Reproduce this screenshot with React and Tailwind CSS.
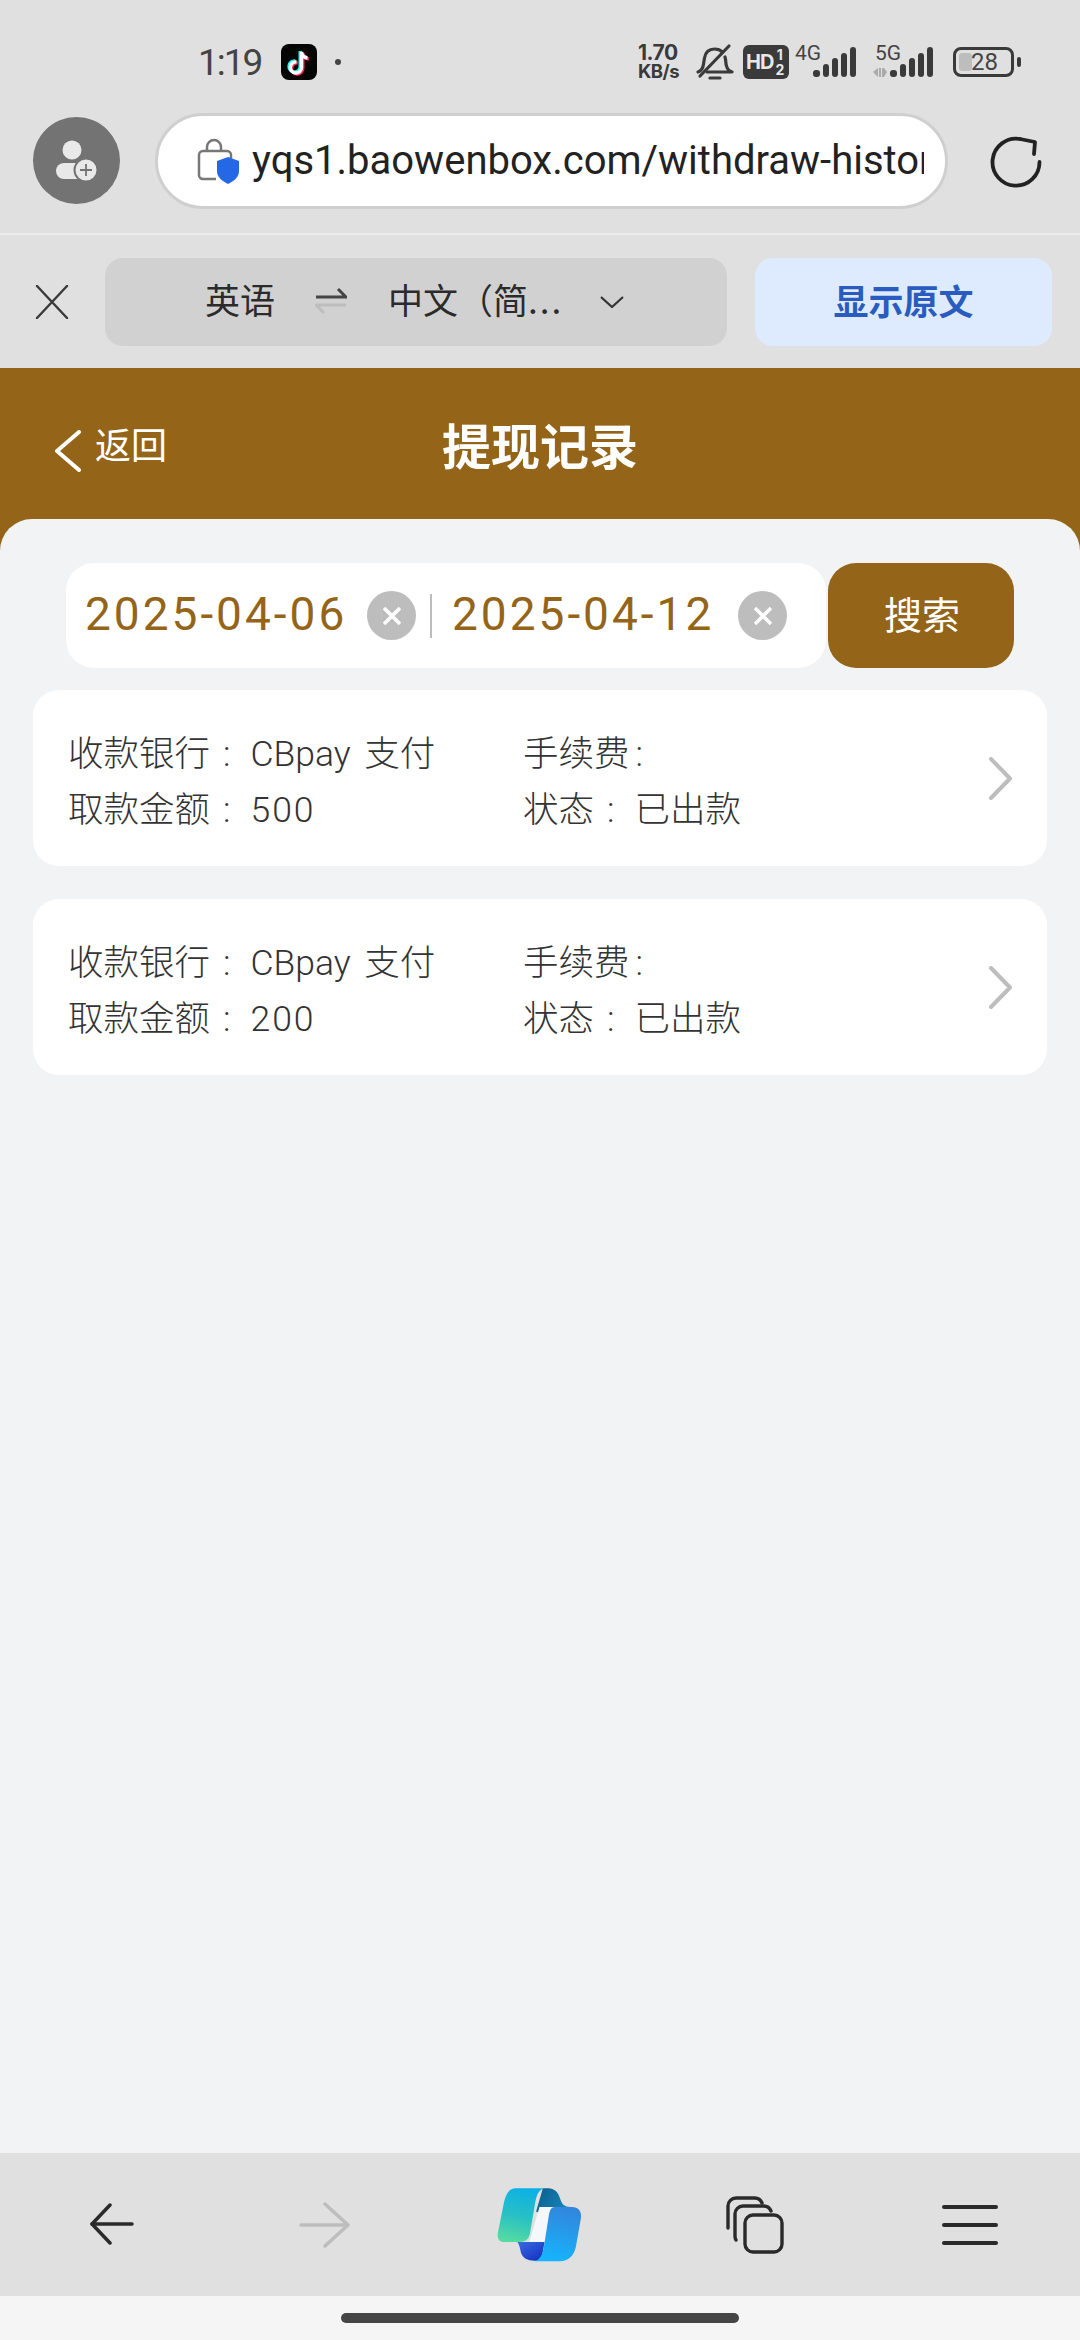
const records = [
  { amount: "500" },
  { amount: "200" },
]

function TikTokIcon() {
  const note = "M20.5 8v15.5a5.6 5.6 0 1 1-5-5.6M20.5 8c.4 3.4 2.7 5.6 6 6"
  return (
    <svg width="36" height="36" viewBox="0 0 36 36" className="ml-[19px]">
      <rect width="36" height="36" rx="8" fill="#050505" />
      <path d={note} transform="translate(-1.3 -1)" fill="none" stroke="#25f4ee" strokeWidth="3.4" />
      <path d={note} transform="translate(1.3 1)" fill="none" stroke="#fe2c55" strokeWidth="3.4" />
      <path d={note} fill="none" stroke="#fff" strokeWidth="3.4" />
    </svg>
  )
}

function Signal({ label, arrows }) {
  return (
    <svg width="66" height="36" viewBox="0 0 66 36" className="shrink-0 overflow-visible">
      <text x={arrows ? 3 : 0} y="16" fontSize="21" fontFamily="Roboto, sans-serif" fill="#444">{label}</text>
      {arrows && (
        <g fill="#aaa">
          <path d="M1 28l5-4v9zM7 24h2v9H7zM10 24h2v9h-2zM15 28l-3-4v9z" />
        </g>
      )}
      <g fill="#3a3a3a">
        <rect x="18" y="26" width="7" height="7" rx="3" />
        <rect x="28" y="20" width="6" height="13" rx="3" />
        <rect x="37" y="14" width="6" height="19" rx="3" />
        <rect x="46" y="9" width="6" height="24" rx="3" />
        <rect x="55" y="3" width="6" height="30" rx="3" />
      </g>
    </svg>
  )
}

function StatusBar() {
  return (
    <div className="flex h-[113px] items-start pt-[44px] bg-[#e0e0e0] text-[#444]">
      <div className="flex h-[36px] items-center pl-[198px]">
        <span className="w-[64px] font-['Roboto',sans-serif] text-[37px] leading-none tracking-[-2px]">1:19</span>
        <TikTokIcon />
        <span className="ml-[18px] h-[6px] w-[6px] rounded-full bg-[#444]" />
      </div>
      <div className="ml-[297px] flex h-[36px] items-center">
        <div className="w-[50px] font-['Inter',sans-serif] text-[21px] font-bold leading-[18px] tracking-[-0.5px] text-[#3a3a3a]">
          <div>1.70</div>
          <div className="text-[18.5px]">KB/s</div>
        </div>
        <svg width="38" height="38" viewBox="0 0 38 38" className="ml-[8px] shrink-0" fill="none" stroke="#3a3a3a" strokeWidth="3.2" strokeLinecap="round" strokeLinejoin="round">
          <path d="M2 29c3-1 5-4 5.500-8l1-6c1-6 5-9 10-9 3 0 6 1 8 3M29 14c1 3 .5 6 1.500 9 .7 3 3 5 5.500 6H11" />
          <path d="M4 33L33 3" />
          <path d="M14 35h10" />
        </svg>
        <div className="ml-[9px] flex h-[34px] w-[46px] shrink-0 items-center rounded-[6px] bg-[#3a3a3a] pl-[3px] font-['Inter',sans-serif] font-bold text-[#e8e8e8]">
          <span className="text-[20px] leading-none tracking-[-1px]">HD</span>
          <span className="ml-[2px] flex flex-col items-center text-[14px] leading-[15px]">
            <span>1</span>
            <span>2</span>
          </span>
        </div>
        <div className="ml-[6px]"><Signal label="4G" /></div>
        <div className="ml-[11px]"><Signal label="5G" arrows /></div>
        <div className="relative ml-[15px] flex h-[30px] w-[61px] shrink-0 items-center rounded-[8px] border-[3px] border-[#3a3a3a]">
          <span className="absolute left-[3px] top-[3px] h-[18px] w-[13px] rounded-[3px] bg-[#bdbdbd]" />
          <span className="relative ml-[15px] font-['Roboto',sans-serif] text-[24px] leading-none">28</span>
        </div>
        <span className="ml-[3px] h-[10px] w-[4px] rounded-full bg-[#3a3a3a]" />
      </div>
    </div>
  )
}

function AddressBar() {
  return (
    <div className="flex h-[120px] items-start bg-[#e0e0e0] pl-[33px]">
      <div className="mt-[4px] flex h-[87px] w-[87px] shrink-0 items-center justify-center rounded-full bg-[#737373]">
        <svg width="44" height="44" viewBox="0 0 44 44">
          <circle cx="17" cy="11" r="9.500" fill="#e9e9e9" />
          <path d="M9 24h16a8 8 0 0 1 0 16H9a8 8 0 0 1 0-16z" fill="#e9e9e9" />
          <circle cx="31" cy="31" r="11.500" fill="#e9e9e9" stroke="#737373" strokeWidth="2" />
          <path d="M31 25v12M25 31h12" stroke="#737373" strokeWidth="1.800" />
        </svg>
      </div>
      <div className="ml-[35px] flex h-[96px] w-[793px] items-center overflow-hidden rounded-full border-[3px] border-[#cfcfcf] bg-white pl-[38px]">
        <svg width="44" height="48" viewBox="0 0 44 48" className="shrink-0">
          <path d="M11 14V10a7 7 0 0 1 14 0v4" fill="none" stroke="#777" strokeWidth="2.500" />
          <path d="M20 42H7a4 4 0 0 1-4-4V18a4 4 0 0 1 4-4h24a4 4 0 0 1 4 4v4" fill="none" stroke="#777" strokeWidth="2.500" />
          <path d="M32 20l11 4v10c0 6-5 10-11 13-6-3-11-7-11-13V24z" fill="#2468e6" />
        </svg>
        <div className="ml-[12px] w-[672px] overflow-hidden whitespace-nowrap font-['Roboto',sans-serif] text-[40px] leading-[48px] text-[#222]">
          yqs1.baowenbox.com/withdraw-history
        </div>
      </div>
      <svg width="52" height="52" viewBox="0 0 52 52" className="ml-[42px] mt-[23px] shrink-0" fill="none" stroke="#222" strokeWidth="3.800" strokeLinecap="round" strokeLinejoin="round">
        <path d="M30 3A23.500 23.500 0 1 0 49.500 26" />
        <path d="M30 3l15 3-1 12" />
      </svg>
    </div>
  )
}

function TranslateBar() {
  return (
    <div className="flex h-[135px] items-start border-t-[2px] border-[#ececec] bg-[#e0e0e0] pt-[23px]">
      <svg width="34" height="34" viewBox="0 0 34 34" className="ml-[35px] mt-[27px] shrink-0" stroke="#3a3a3a" strokeWidth="2.400" strokeLinecap="round">
        <path d="M2 1l30 32M32 1L2 33" />
      </svg>
      <div className="ml-[36px] flex h-[88px] w-[622px] items-center rounded-[18px] bg-[#d1d1d1] pb-[5px] pl-[100px] text-[35px] text-[#2b2b2b]">
        <span className="w-[70px]">英语</span>
        <svg width="32" height="30" viewBox="0 0 32 30" className="ml-[40px] shrink-0" fill="none" strokeWidth="3">
          <path d="M1 12h30l-8-8" stroke="#444" />
          <path d="M31 20H1l8 8" stroke="#bdbdbd" />
        </svg>
        <span className="ml-[41px] w-[178px] whitespace-nowrap">中文（简<span className="tracking-[2px]">...</span></span>
        <svg width="24" height="12" viewBox="0 0 24 12" className="ml-[34px] mt-[5px] shrink-0" fill="none" stroke="#333" strokeWidth="2.200">
          <path d="M1 1l11 10L23 1" />
        </svg>
      </div>
      <div className="ml-[28px] flex h-[88px] w-[297px] items-center justify-center rounded-[18px] bg-[#deebff] pb-[3px] text-[35px] font-bold text-[#2a5cc0]">
        显示原文
      </div>
    </div>
  )
}

function DateField({ value, gap }) {
  return (
    <>
      <span className="mb-[3px] w-[258px] shrink-0 whitespace-nowrap font-['Roboto',sans-serif] text-[46px] leading-none tracking-[3px] text-[#946519]">{value}</span>
      <span className={`${gap} flex h-[49px] w-[49px] shrink-0 items-center justify-center rounded-full bg-[#bdbdbd]`}>
        <svg width="24" height="24" viewBox="0 0 24 24" stroke="#fff" strokeWidth="3.500">
          <path d="M4 4l16 16M20 4L4 20" />
        </svg>
      </span>
    </>
  )
}

function SearchRow() {
  return (
    <div className="ml-[66px] flex h-[105px] w-[948px] gap-[2px]">
      <div className="flex w-[760px] items-center rounded-[28px] bg-white pl-[19px]">
        <DateField value="2025-04-06" gap="ml-[24px]" />
        <span className="ml-[14px] mr-[20px] h-[44px] w-[2px] shrink-0 bg-[#bdbdbd]" />
        <DateField value="2025-04-12" gap="ml-[28px]" />
      </div>
      <button className="flex w-[186px] items-center justify-center rounded-[28px] bg-[#946519] pb-[6px] pl-[2px] text-[38px] text-white">
        搜索
      </button>
    </div>
  )
}

function Field({ label, value, colonGap = true }) {
  return (
    <div className="flex h-[56px] items-center whitespace-nowrap">
      <span>{label}</span>
      <span className={colonGap ? "ml-[13px] mr-[20px]" : "ml-[6px]"}>:</span>
      {value && <span className="[word-spacing:5px]">{value}</span>}
    </div>
  )
}

function RecordCard({ amount }) {
  return (
    <div className="flex h-[176px] items-center rounded-[26px] bg-white pl-[35px] font-['Roboto','Noto_Sans_CJK_SC',sans-serif] text-[35.500px] font-light text-[#333]">
      <div className="w-[455px] shrink-0 pt-[9px]">
        <Field label="收款银行" value="CBpay 支付" />
        <Field label="取款金额" value={<span className="tracking-[2px]">{amount}</span>} />
      </div>
      <div className="w-[455px] shrink-0 pt-[9px]">
        <Field label="手续费" colonGap={false} />
        <Field label="状态" value="已出款" />
      </div>
      <svg width="25" height="43" viewBox="0 0 25 43" className="ml-[10px] shrink-0" fill="none" stroke="#bdbdbd" strokeWidth="4" strokeLinecap="round" strokeLinejoin="round">
        <path d="M3 2l19 19.500L3 41" />
      </svg>
    </div>
  )
}

function BottomNav() {
  return (
    <div className="flex h-[143px] items-start bg-[#e0e0e0] text-[#222]">
      <svg width="44" height="42" viewBox="0 0 44 42" className="ml-[90px] mt-[50px] shrink-0" fill="none" stroke="#2a2a2a" strokeWidth="3.500" strokeLinecap="round" strokeLinejoin="round">
        <path d="M20 2L2 21l18 19" />
        <path d="M2 21h40" />
      </svg>
      <svg width="52" height="46" viewBox="0 0 52 46" className="ml-[165px] mt-[49px] shrink-0" fill="none" stroke="#bdbdbd" strokeWidth="3.500" strokeLinecap="round" strokeLinejoin="round">
        <path d="M26 2l23 21-23 21" />
        <path d="M2 23h46" />
      </svg>
      <svg width="85" height="74" viewBox="55 56 250 218" className="ml-[146px] mt-[35px] shrink-0">
        <defs>
          <linearGradient id="copLeft" x1="0.500" y1="0" x2="0.300" y2="1">
            <stop offset="0" stopColor="#0db2e4" />
            <stop offset="0.500" stopColor="#27bfc6" />
            <stop offset="1" stopColor="#55dba0" />
          </linearGradient>
          <linearGradient id="copRight" x1="0.600" y1="0" x2="0.400" y2="1">
            <stop offset="0" stopColor="#3286dc" />
            <stop offset="1" stopColor="#16b4fc" />
          </linearGradient>
          <linearGradient id="copTop" x1="0" y1="0" x2="1" y2="0.500">
            <stop offset="0" stopColor="#0a5c8c" />
            <stop offset="1" stopColor="#1784b8" />
          </linearGradient>
          <linearGradient id="copBottom" x1="0.200" y1="0" x2="0.800" y2="1">
            <stop offset="0" stopColor="#4377ea" />
            <stop offset="1" stopColor="#1433c0" />
          </linearGradient>
        </defs>
        <path d="M190 57h15c20 0 30 13 35 28 5 20 15 27 30 27h-45c-20 0-30 8-35 23l-20-10z" fill="url(#copTop)" />
        <path d="M120 215h30c20 0 30-10 35-30l10 30-10 55h-20c-20 0-35-8-40-25-3-15-5-23-10-30z" fill="url(#copBottom)" />
        <path d="M180 112h45l-25 103h-50z" fill="#f5f8fa" />
        <path d="M110 57h85c-15 3-23 18-27 38l-16 95c-4 18-14 25-32 25H75c-13 0-20-10-18-25l18-90c5-25 15-43 35-43z" fill="url(#copLeft)" />
        <path d="M225 112h50c20 0 30 13 27 33l-15 85c-5 25-22 42-47 42h-75c15-4 23-17 27-37l15-95c3-20 8-28 18-28z" fill="url(#copRight)" />
      </svg>
      <svg width="58" height="58" viewBox="0 0 58 58" className="ml-[144px] mt-[43px] shrink-0" fill="none" stroke="#2a2a2a" strokeWidth="3.400" strokeLinecap="round" strokeLinejoin="round">
        <rect x="19" y="19" width="37" height="37" rx="8" />
        <path d="M10 44a8 8 0 0 1-1-4V18a8 8 0 0 1 8-8h20a8 8 0 0 1 8 5" />
        <path d="M2 32V10a8 8 0 0 1 8-8h18a8 8 0 0 1 8 5" />
      </svg>
      <div className="ml-[158px] mt-[52px] flex h-[40px] w-[56px] shrink-0 flex-col justify-between">
        <span className="h-[4px] rounded-full bg-[#2a2a2a]" />
        <span className="h-[4px] rounded-full bg-[#2a2a2a]" />
        <span className="h-[4px] rounded-full bg-[#2a2a2a]" />
      </div>
    </div>
  )
}

export default function App() {
  return (
    <div className="flex h-[2340px] w-[1080px] flex-col overflow-hidden bg-[#946519] font-['Noto_Sans_CJK_SC',sans-serif]">
      <StatusBar />
      <AddressBar />
      <TranslateBar />

      <header className="relative flex h-[151px] items-center justify-center text-white">
        <div className="absolute left-[54px] top-[62px] flex items-center">
          <svg width="28" height="42" viewBox="0 0 28 42" fill="none" stroke="#fff" strokeWidth="4" strokeLinecap="round" strokeLinejoin="round">
            <path d="M25 2L3 21l22 19" />
          </svg>
          <span className="relative -top-[8px] ml-[13px] text-[36px] leading-none">返回</span>
        </div>
        <h1 className="text-[49px] font-bold leading-none">提现记录</h1>
      </header>

      <main className="flex-1 rounded-t-[32px] bg-[#f2f3f5] pt-[44px]">
        <SearchRow />
        <div className="mx-[33px] mt-[22px] flex flex-col gap-[33px]">
          {records.map((record, i) => (
            <RecordCard key={i} amount={record.amount} />
          ))}
        </div>
      </main>

      <BottomNav />
      <div className="flex h-[44px] justify-center bg-[#f5f5f5] pt-[17px]">
        <span className="h-[10px] w-[398px] rounded-full bg-[#454545]" />
      </div>
    </div>
  )
}
